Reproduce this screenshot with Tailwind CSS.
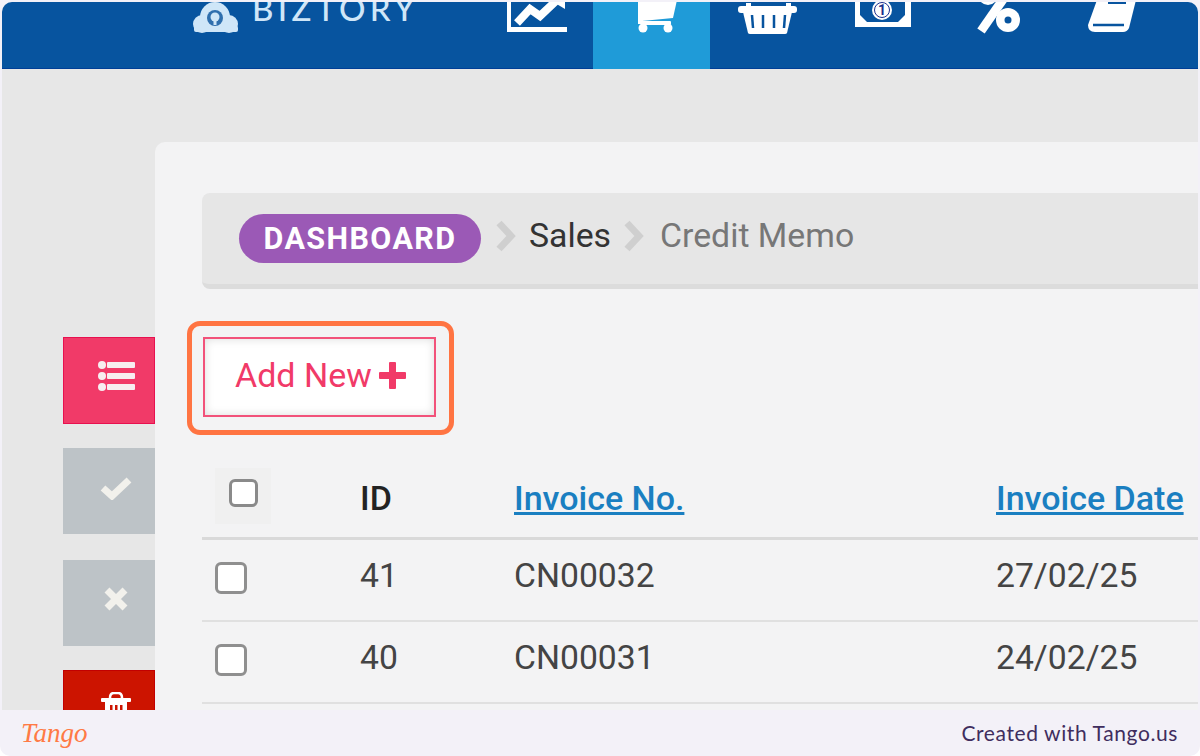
<!DOCTYPE html>
<html lang="en">
<head>
  <meta charset="UTF-8">
  <title>Credit Memo</title>
  <script src="https://cdn.jsdelivr.net/npm/@tailwindcss/browser@4"></script>
</head>
<body class="bg-white overflow-hidden">
<div class="w-[1200px] h-[756px] flex flex-col bg-[#f3f1f8] rounded-b-[10px] overflow-hidden font-['Roboto',sans-serif]">

  <div class="h-[708px] mt-[2px] mx-[2px] rounded-t-[10px] overflow-hidden flex flex-col bg-[#e7e7e7]">
    <!-- top bar -->
    <header class="h-[67px] shrink-0 bg-[#07549f] border-b-[1px] border-[#003f97] flex items-start">
      <div class="w-[474px] h-[34px] flex items-start">
        <svg class="ml-[190px] shrink-0" width="48" height="31" viewBox="0 0 48 31">
          <circle cx="23" cy="15" r="15" fill="#cfe6f8"/>
          <circle cx="10" cy="22" r="9" fill="#cfe6f8"/>
          <circle cx="37" cy="22" r="9" fill="#cfe6f8"/>
          <rect x="2" y="24" width="44" height="6" rx="2" fill="#cfe6f8"/>
          <circle cx="23" cy="16" r="8" fill="#2f6fae"/>
          <circle cx="23" cy="15" r="4.5" fill="#cfe6f8"/>
          <rect x="21.5" y="16" width="3" height="7" fill="#cfe6f8"/>
        </svg>
        <span class="ml-[12px] -mt-[11px] text-[33px] leading-[34px] tracking-[4.4px] font-medium text-[#cfe6f8] font-['Lato',sans-serif]">BIZTORY</span>
      </div>

      <nav class="flex items-start">
        <div class="w-[117px] h-[67px]">
          <svg width="117" height="31" viewBox="0 0 117 31" fill="#fff">
            <rect x="31" y="0" width="4" height="30"/>
            <rect x="31" y="25" width="60" height="5"/>
            <path d="M41 21 L54 7 L64 14 L82 -3" fill="none" stroke="#fff" stroke-width="8"/>
            <path d="M74 -2 L89 -6 L89 7 Z"/>
          </svg>
        </div>
        <div class="w-[117px] h-[67px] bg-[#1f9bd8]">
          <svg width="117" height="34" viewBox="0 0 117 34" fill="#fff">
            <path d="M45 -2 H84 L80 16 L49 19 Z"/>
            <rect x="48" y="19" width="30" height="4" rx="1"/>
            <rect x="45" y="0" width="5" height="22"/>
            <circle cx="50" cy="26" r="4.5"/>
            <circle cx="75" cy="26" r="4.5"/>
          </svg>
        </div>
        <div class="w-[117px] h-[67px]">
          <svg width="117" height="34" viewBox="0 0 117 34" fill="#fff">
            <rect x="36" y="1" width="5" height="5"/>
            <rect x="76" y="1" width="5" height="5"/>
            <rect x="28" y="4" width="59" height="7" rx="3"/>
            <path d="M33 10 H82 L77 31 Q76.500 32 75 32 H40 Q38.500 32 38 31 Z"/>
            <g stroke="#07549f" stroke-width="2.500">
              <line x1="42" y1="13" x2="43" y2="26"/>
              <line x1="53" y1="13" x2="53" y2="26"/>
              <line x1="64" y1="13" x2="64" y2="26"/>
              <line x1="75" y1="13" x2="74" y2="26"/>
            </g>
          </svg>
        </div>
        <div class="w-[117px] h-[67px]">
          <svg width="117" height="26" viewBox="0 0 117 26">
            <rect x="28" y="-2" width="56" height="27" fill="#fff"/>
            <path d="M33 -2 H78 V13 L71 20 H40 L33 13 Z" fill="#07549f"/>
            <circle cx="55" cy="8" r="10" fill="#fff"/>
            <circle cx="55" cy="8" r="7.500" fill="none" stroke="#1c2f8c" stroke-width="1"/>
            <text x="55" y="13" text-anchor="middle" font-size="14" font-weight="700" fill="#1c2f8c">1</text>
          </svg>
        </div>
        <div class="w-[117px] h-[67px]">
          <svg width="117" height="32" viewBox="0 0 117 32" fill="#fff">
            <path d="M37 29 L60 -4" stroke="#fff" stroke-width="9" fill="none"/>
            <circle cx="44" cy="-7" r="10"/>
            <circle cx="64" cy="18" r="12"/>
            <circle cx="64" cy="18" r="3.500" fill="#07549f"/>
          </svg>
        </div>
        <div class="w-[117px] h-[67px]">
          <svg width="117" height="32" viewBox="0 0 117 32">
            <path d="M36 -2 H75 L68 26 Q66 30 62 30 H34 Q27 30 27 23 Z" fill="#fff"/>
            <path d="M32 23 H63" stroke="#07549f" stroke-width="2.500" fill="none"/>
            <path d="M47 1 H65" stroke="#07549f" stroke-width="2" fill="none"/>
          </svg>
        </div>
      </nav>
    </header>

    <div class="flex-1 flex min-h-0 overflow-hidden">
      <!-- action rail -->
      <aside class="w-[153px] shrink-0 pl-[61px] pt-[268px] flex flex-col gap-[24px]">
        <button class="w-[92px] h-[87px] shrink-0 flex items-center justify-center pl-[14px] pb-[10px] bg-[#f13a68] border border-[#e8104f]">
          <svg width="38" height="30" viewBox="0 0 38 30" fill="#f7eef0">
            <circle cx="5" cy="4" r="4"/><rect x="10" y="1" width="28" height="6" rx="1"/>
            <circle cx="5" cy="15" r="4"/><rect x="10" y="12" width="28" height="6" rx="1"/>
            <circle cx="5" cy="26" r="4"/><rect x="10" y="23" width="28" height="6" rx="1"/>
          </svg>
        </button>
        <button class="w-[92px] h-[86px] shrink-0 flex items-center justify-center pl-[14px] pb-[6px] bg-[#bdc3c7]">
          <svg width="32" height="24" viewBox="0 0 32 24">
            <path d="M3 12 L12 20 L29 4" fill="none" stroke="#f2f1ec" stroke-width="7"/>
          </svg>
        </button>
        <button class="w-[92px] h-[86px] shrink-0 mt-[2px] flex items-center justify-center pl-[14px] pb-[9px] bg-[#bdc3c7]">
          <svg width="26" height="26" viewBox="0 0 26 26">
            <path d="M4 4 L22 22 M22 4 L4 22" fill="none" stroke="#f2f1ec" stroke-width="7"/>
          </svg>
        </button>
        <button class="w-[92px] h-[87px] shrink-0 flex items-start justify-center pt-[21px] pl-[14px] bg-[#cc1400] border border-[#c20000]">
          <svg width="30" height="34" viewBox="0 0 30 34" fill="#fff">
            <path d="M9 6 Q9 1 13 1 H17 Q21 1 21 6" fill="none" stroke="#fff" stroke-width="2.500"/>
            <rect x="0" y="6" width="30" height="4" rx="1"/>
            <rect x="4" y="10" width="22" height="24"/>
            <g fill="#cc1400"><rect x="9" y="13" width="2.500" height="18"/><rect x="14" y="13" width="2.500" height="18"/><rect x="19" y="13" width="2.500" height="18"/></g>
          </svg>
        </button>
      </aside>

      <!-- card -->
      <main class="flex-1 min-w-0 mt-[73px] bg-[#f3f3f4] rounded-tl-[10px] pl-[47px] pt-[51px]">
        <div class="h-[96px] bg-[#e6e6e6] border-b-[5px] border-[#dcdcdc] rounded-l-[8px] pl-[37px] pt-[21px] flex items-start">
          <a class="h-[49px] w-[242px] rounded-full bg-[#9b59b6] text-white font-bold text-[30.5px] tracking-[1.4px] flex items-center justify-center">DASHBOARD</a>
          <svg class="ml-[13px] mt-[6px]" width="24" height="32" viewBox="0 0 24 32"><path d="M5 3 L17 16 L5 29" fill="none" stroke="#cfcfcf" stroke-width="7"/></svg>
          <span class="ml-[11px] text-[33.8px] leading-[44px] text-[#333]">Sales</span>
          <svg class="ml-[11px] mt-[6px]" width="24" height="32" viewBox="0 0 24 32"><path d="M5 3 L17 16 L5 29" fill="none" stroke="#cfcfcf" stroke-width="7"/></svg>
          <span class="ml-[14px] text-[33.8px] leading-[44px] text-[#777]">Credit Memo</span>
        </div>

        <div class="relative mt-[48px] ml-[1px] w-[233px]">
          <button class="w-[233px] h-[80px] pl-[30px] pb-[4px] bg-white border-[2px] border-[#f2527a] shadow-[inset_0_0_10px_rgba(0,0,0,0.14)] flex items-center text-[34px] text-[#f13a68]">
            Add New
            <svg class="ml-[7px]" width="27" height="27" viewBox="0 0 27 27" fill="#f13a68">
              <rect x="10" y="0" width="7" height="27" rx="1"/><rect x="0" y="10" width="27" height="7" rx="1"/>
            </svg>
          </button>
          <!-- tutorial highlight -->
          <div class="absolute -left-[16px] -top-[16px] w-[267px] h-[114px] border-[5px] border-[#ff7442] rounded-[13px]"></div>
        </div>

        <!-- table -->
        <div class="mt-[51px] text-[33.7px] text-[#444]">
          <div class="h-[72px] pb-[9px] grid grid-cols-[158px_154px_482px_1fr] items-center border-b-[3px] border-[#d9d9d9]">
            <div class="pl-[13px]">
              <div class="w-[56px] h-[56px] -mt-[5px] pb-[5px] bg-[#f0f0f0] flex items-center justify-center">
                <input type="checkbox" class="appearance-none w-[29px] h-[28px] bg-white border-[3px] border-[#8a8a8a] rounded-[6px]">
              </div>
            </div>
            <div class="font-medium text-[34px] text-[#222]">ID</div>
            <a class="font-medium text-[34px] text-[#1a7fc1] underline">Invoice No.</a>
            <a class="font-medium text-[34px] text-[#1a7fc1] underline whitespace-nowrap">Invoice Date</a>
          </div>
          <div class="h-[82px] pb-[5px] grid grid-cols-[158px_154px_482px_1fr] items-center border-b-[2px] border-[#e0e0e0]">
            <div class="pl-[13px] flex"><input type="checkbox" class="appearance-none w-[32px] h-[32px] bg-white border-[3px] border-[#8f8f8f] rounded-[6px]"></div>
            <div class="pb-[3px]">41</div>
            <div class="pb-[3px]">CN00032</div>
            <div class="pb-[3px]">27/02/25</div>
          </div>
          <div class="h-[82px] pb-[5px] grid grid-cols-[158px_154px_482px_1fr] items-center border-b-[2px] border-[#e0e0e0]">
            <div class="pl-[13px] flex"><input type="checkbox" class="appearance-none w-[32px] h-[32px] bg-white border-[3px] border-[#8f8f8f] rounded-[6px]"></div>
            <div class="pb-[3px]">40</div>
            <div class="pb-[3px]">CN00031</div>
            <div class="pb-[3px]">24/02/25</div>
          </div>
        </div>
      </main>
    </div>
  </div>

  <!-- footer -->
  <footer class="h-[46px] shrink-0 flex items-center justify-between pl-[21px] pr-[22px]">
    <span class="font-['Liberation_Serif',serif] italic text-[27px] leading-none text-[#ff7a45]">Tango</span>
    <span class="font-['Lato',sans-serif] text-[21px] tracking-[0.6px] text-[#3f2d5e]">Created with Tango.us</span>
  </footer>
</div>
</body>
</html>
